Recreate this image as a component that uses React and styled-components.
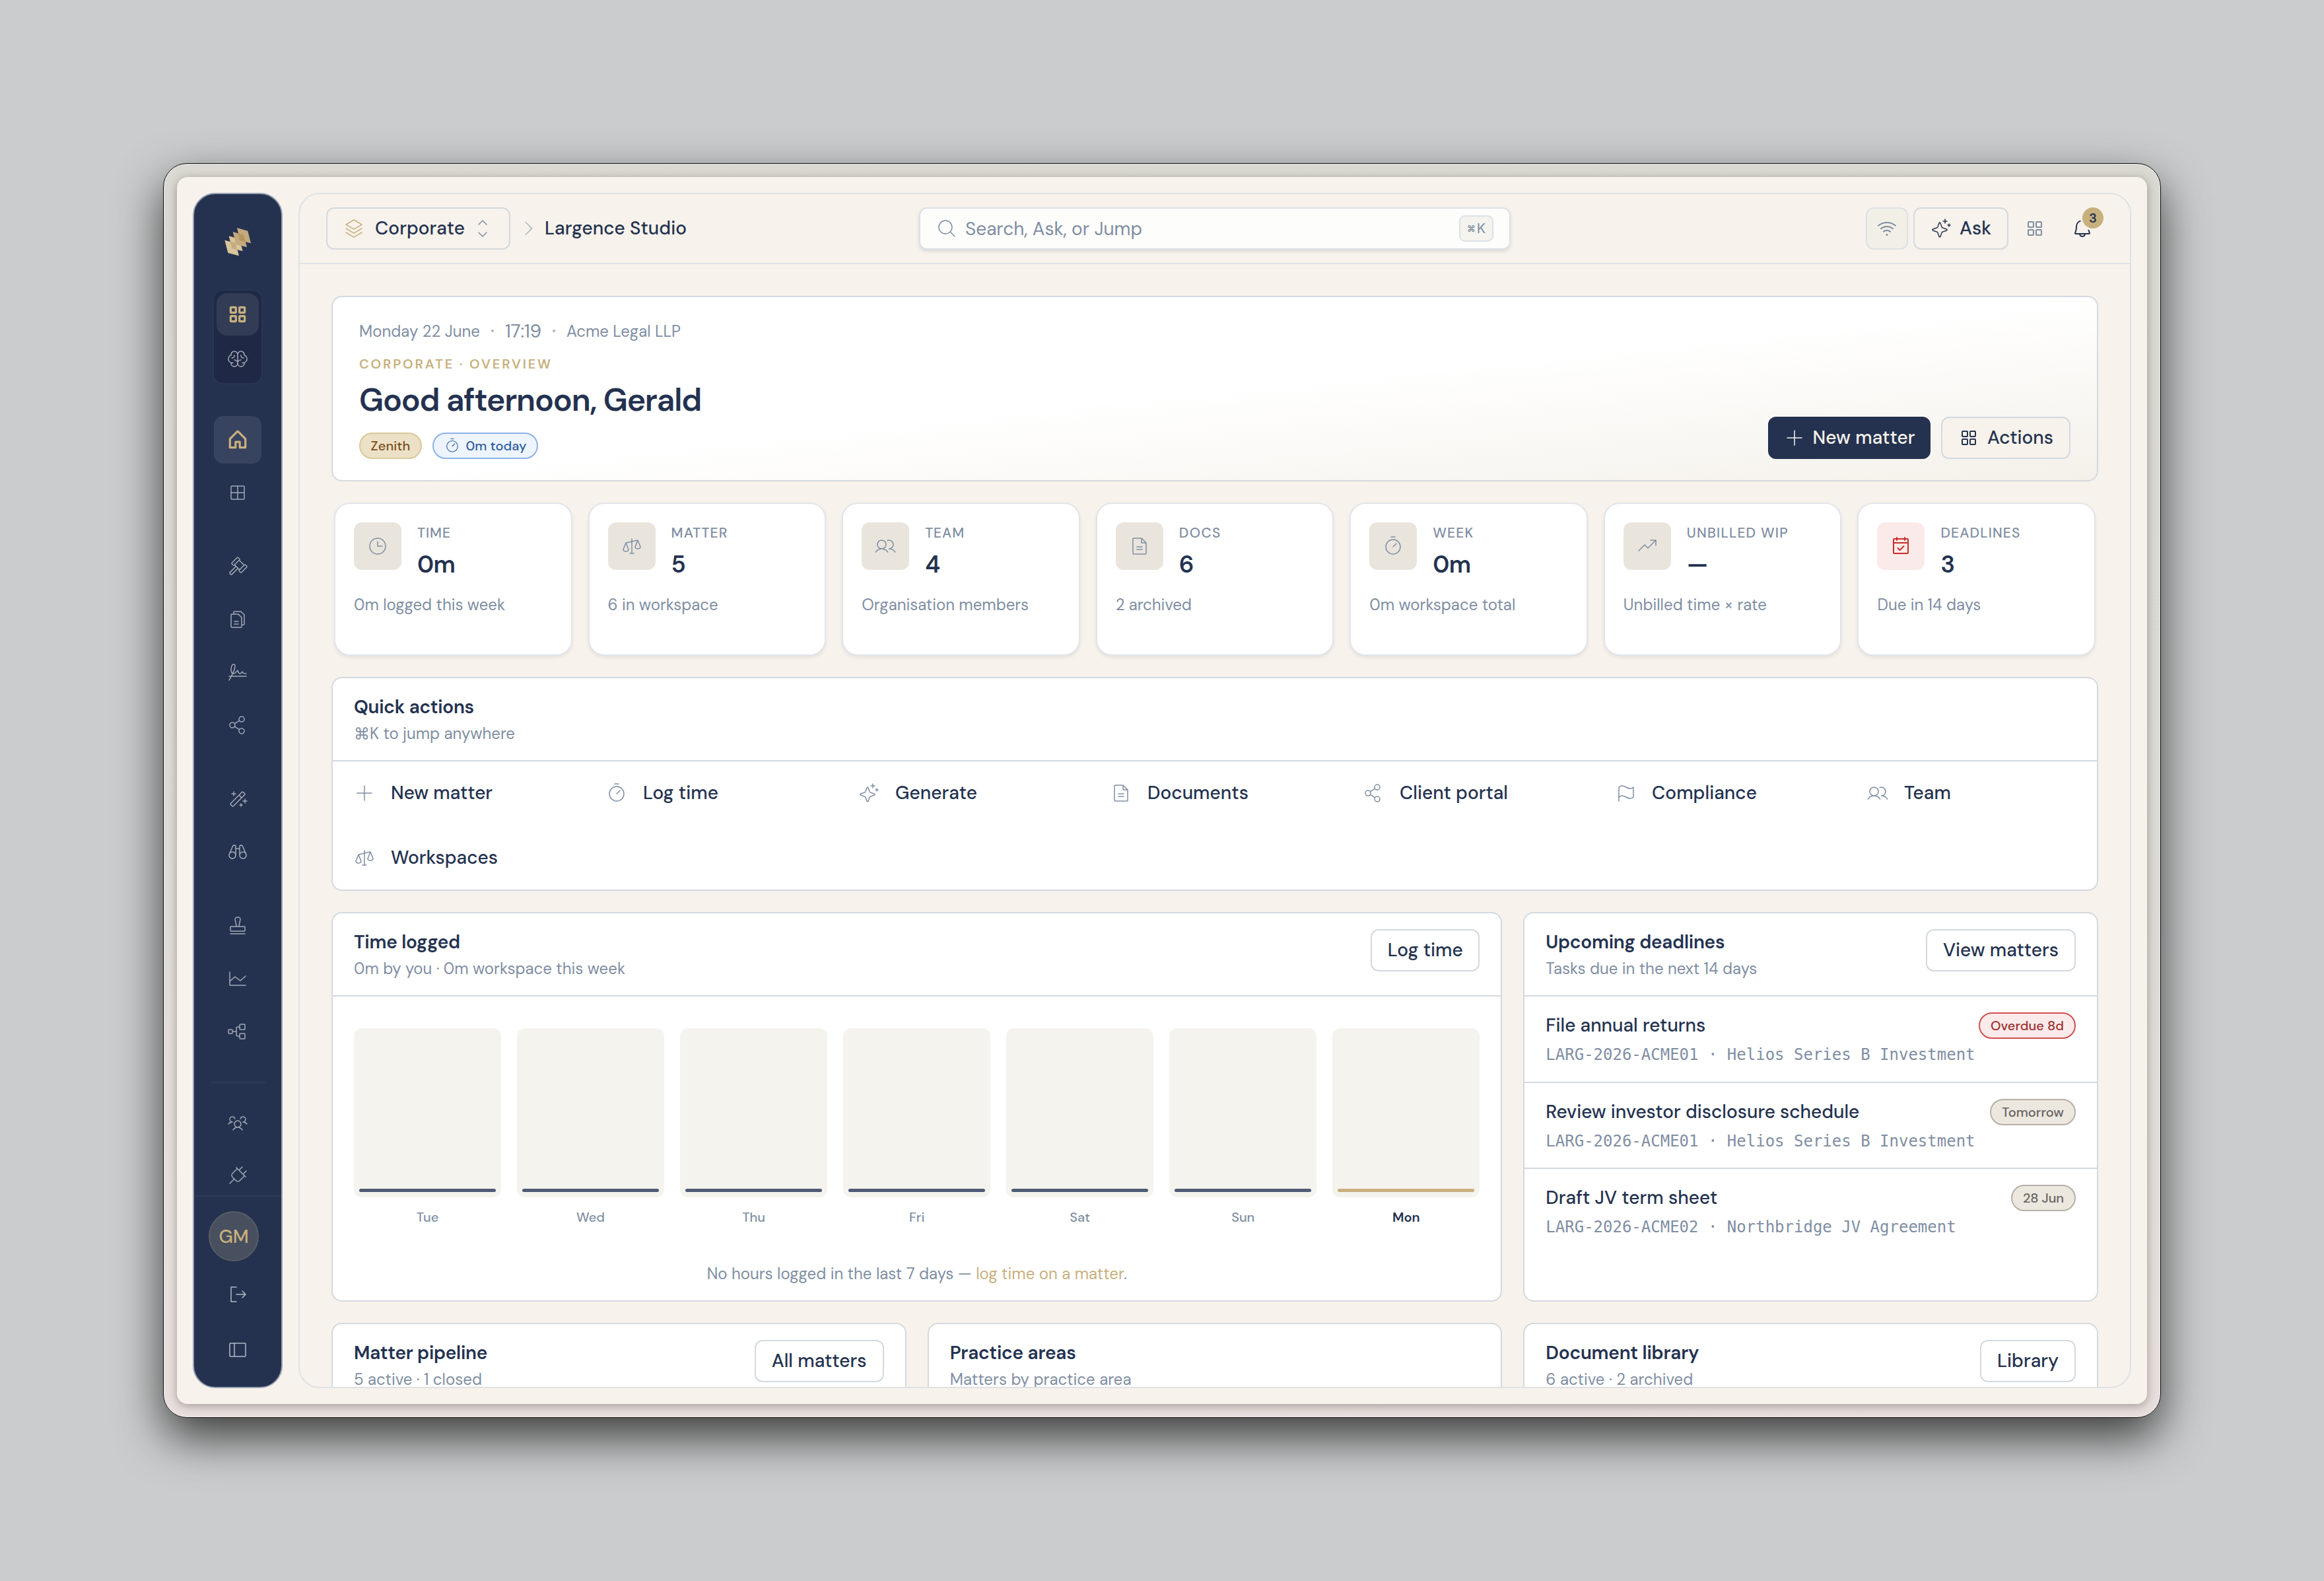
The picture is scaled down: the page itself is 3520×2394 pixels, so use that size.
import { useLayoutEffect, useRef, useState } from 'react';
import styled, { createGlobalStyle, css } from 'styled-components';
import {
  PiBell,
  PiBinocularsLight,
  PiBrainLight,
  PiCalendarCheck,
  PiCaretRightLight,
  PiCaretUpDownLight,
  PiChartLineLight,
  PiClockLight,
  PiFilesLight,
  PiFileTextLight,
  PiFlagLight,
  PiGavelLight,
  PiGridFourLight,
  PiHouseBold,
  PiMagicWandLight,
  PiMagnifyingGlassLight,
  PiPlugLight,
  PiPlusLight,
  PiScalesLight,
  PiShareNetworkLight,
  PiSidebarSimpleLight,
  PiSignatureLight,
  PiSignOutLight,
  PiSparkleLight,
  PiSquaresFour,
  PiSquaresFourBold,
  PiStackLight,
  PiStampLight,
  PiTimerLight,
  PiTreeStructureLight,
  PiTrendUpLight,
  PiUsersLight,
  PiUsersThreeLight,
  PiWifiHigh,
} from 'react-icons/pi';

const navy = '#243250';
const slate = '#7f8ea3';
const gold = '#c8b07e';
const line = '#d3d9e0';
const sand = '#f7f2eb';

// size, weight and the optical size that goes with it
const type = (size, weight = 400) => css`
  font-size: ${size}px;
  font-weight: ${weight};
  font-variation-settings: 'opsz' ${Math.max(12, size / 2)};
`;

const GlobalStyle = createGlobalStyle`
  * {
    box-sizing: border-box;
  }
  body {
    margin: 0;
    background: #cbcccd;
    color: ${navy};
    font-family: 'DM Sans', Inter, 'Noto Sans', sans-serif;
    -webkit-font-smoothing: antialiased;
  }
  svg {
    display: block;
    flex: none;
  }
`;

const Desk = styled.div`
  width: 3520px;
  height: 2394px;
  padding: 247px 0 0 247px;
  overflow: hidden;
`;

const Device = styled.div`
  width: 3026px;
  height: 1900px;
  padding: 20px;
  border: 1px solid #0c0e0e;
  border-radius: 36px;
  background: linear-gradient(185deg, #d9d8d1 0%, #dcdad5 50%, #e8e0de 95%);
  box-shadow: 0 30px 70px rgba(0, 0, 0, 0.7), inset 0 0 2px 1px rgba(255, 255, 255, 0.35);
`;

const Screen = styled.div`
  display: flex;
  gap: 24px;
  width: 100%;
  height: 100%;
  padding: 24px;
  border-radius: 16px;
  background: ${sand};
  box-shadow: 0 3px 14px rgba(60, 50, 45, 0.4);
`;

/* sidebar */

const Sidebar = styled.aside`
  display: flex;
  flex-direction: column;
  flex: none;
  width: 136px;
  border: 2px solid #98a1b3;
  border-radius: 34px;
  background: ${navy};
  overflow: hidden;
`;

const Brand = styled.div`
  display: flex;
  justify-content: center;
  flex: none;
  height: 146px;
  padding-top: 41px;
`;

const Switch = styled.div`
  display: flex;
  flex-direction: column;
  gap: 4px;
  align-self: center;
  flex: none;
  width: 72px;
  height: 140px;
  padding: 4px;
  margin-bottom: 50px;
  border-radius: 14px;
  background: #1f2945;
  box-shadow: 0 0 0 2px rgba(255, 255, 255, 0.02);
`;

const SwitchItem = styled.div`
  display: flex;
  align-items: center;
  justify-content: center;
  height: 64px;
  border-radius: 16px;
  color: ${(p) => (p.$active ? gold : '#a3a8b4')};
  background: ${(p) => (p.$active ? '#323d55' : 'transparent')};
`;

const Nav = styled.nav`
  flex: 1;
  min-height: 0;
  overflow: hidden;
`;

const NavGroup = styled.div`
  display: flex;
  flex-direction: column;
  align-items: center;
  gap: 8px;
  margin-bottom: 40px;
`;

const NavItem = styled.div`
  display: flex;
  align-items: center;
  justify-content: center;
  flex: none;
  width: 72px;
  height: 72px;
  border-radius: 14px;
  color: ${(p) => (p.$active ? gold : '#a3a8b4')};
  background: ${(p) => (p.$active ? '#38445f' : 'transparent')};
`;

const NavRule = styled.div`
  height: 2px;
  margin: 0 24px 24px;
  background: #2d3b5b;
`;

const SideFoot = styled.div`
  display: flex;
  flex-direction: column;
  align-items: center;
  flex: none;
  height: 290px;
  padding-top: 22px;
  border-top: 2px solid #2d3b5b;
`;

const Avatar = styled.div`
  display: flex;
  align-items: center;
  justify-content: center;
  align-self: flex-start;
  width: 76px;
  height: 76px;
  margin: 0 0 14px 22px;
  border: 2px solid #585c64;
  border-radius: 50%;
  background: #484f5e;
  color: ${gold};
  ${type(28, 500)}
`;

const FootItem = styled(NavItem)`
  margin-bottom: 12px;
  color: #b4bac5;
`;

/* main panel */

const Main = styled.main`
  display: flex;
  flex-direction: column;
  flex: 1;
  min-width: 0;
  border: 2px solid #dfe2e5;
  border-radius: 32px;
  overflow: hidden;
`;

const TopBar = styled.header`
  display: grid;
  grid-template-columns: 1fr 896px 1fr;
  align-items: center;
  flex: none;
  height: 106px;
  padding: 0 40px;
  border-bottom: 2px solid #dfe2e5;
`;

const TopSide = styled.div`
  display: flex;
  align-items: center;
  justify-content: ${(p) => (p.$end ? 'flex-end' : 'flex-start')};
  gap: ${(p) => (p.$end ? '8px' : '0')};
  height: 64px;
`;

const OrgButton = styled.div`
  display: flex;
  align-items: center;
  width: 279px;
  height: 64px;
  padding: 0 24px;
  border: 2px solid ${line};
  border-radius: 12px;
  color: ${slate};
  ${type(28, 500)}

  svg:first-child {
    margin-right: 16px;
    color: ${gold};
  }
  svg:last-child {
    margin-left: auto;
  }
`;

const Crumb = styled.div`
  display: flex;
  align-items: center;
  gap: 10px;
  margin-left: 12px;
  color: #a3adba;
  ${type(28, 500)}
`;

const Ink = styled.span`
  margin-top: -1px;
  color: ${navy};
`;

const SearchBox = styled.div`
  display: flex;
  align-items: center;
  gap: 12px;
  height: 64px;
  padding: 0 24px;
  border: 2px solid #dce1e6;
  border-radius: 12px;
  background: #fdfdfb;
  box-shadow: 0 3px 5px rgba(36, 50, 80, 0.12);
  color: ${slate};
  ${type(28)}
`;

const Kbd = styled.kbd`
  display: flex;
  align-items: center;
  justify-content: center;
  gap: 2px;
  width: 52px;
  height: 40px;
  margin-left: auto;
  border: 2px solid #dce1e6;
  border-radius: 9px;
  background: #f4f3ee;
  font-family: Inter, 'DejaVu Sans', sans-serif;
  font-size: 20px;

  span {
    font-size: 13px;
    font-weight: 600;
  }
`;

const IconButton = styled.div`
  display: flex;
  align-items: center;
  justify-content: center;
  position: relative;
  width: 64px;
  height: 64px;
  border: 2px solid ${(p) => (p.$filled ? '#dde1e4' : 'transparent')};
  border-radius: 12px;
  background: ${(p) => (p.$filled ? '#f2efe6' : 'transparent')};
  color: ${(p) => (p.$dark ? navy : slate)};
`;

const Count = styled.span`
  position: absolute;
  top: -5px;
  right: -5px;
  width: 38px;
  height: 38px;
  border: 3px solid ${sand};
  border-radius: 50%;
  background: ${gold};
  color: ${navy};
  ${type(20, 600)}
  line-height: 32px;
  text-align: center;
`;

const Button = styled.div`
  display: flex;
  align-items: center;
  justify-content: center;
  gap: 12px;
  flex: none;
  width: ${(p) => p.$width}px;
  height: 64px;
  border: 2px solid ${line};
  border-radius: 12px;
  color: ${navy};
  ${type(28, 500)}
  ${(p) =>
    p.$primary &&
    css`
      border-color: ${navy};
      background: ${navy};
      color: ${sand};
    `}
  ${(p) =>
    p.$sand &&
    css`
      background: ${sand};
    `}

  > span {
    margin-top: -1px;
  }
`;

const Content = styled.div`
  display: flex;
  flex-direction: column;
  gap: 32px;
  flex: 1;
  min-height: 0;
  padding: 48px 48px 0;
  overflow: hidden;
`;

const Hero = styled.section`
  display: flex;
  justify-content: space-between;
  align-items: flex-end;
  flex: none;
  height: 281px;
  padding: 32px 40px;
  border: 2px solid ${line};
  border-radius: 16px;
  background: linear-gradient(to bottom right, #fff 0%, #fff 50%, #f4f1ea 100%);
`;

const HeroMeta = styled.div`
  display: flex;
  align-items: center;
  height: 40px;
  color: ${slate};
  ${type(24)}
`;

const Dot = styled.span`
  width: 4px;
  height: 4px;
  margin: 0 17px;
  border-radius: 50%;
  background: #a9b4c2;
`;

const Clock = styled.span`
  ${type(28)}
`;

const Eyebrow = styled.div`
  margin-top: 16px;
  color: ${gold};
  ${type(20, 600)}
  line-height: 28px;
`;

const Greeting = styled.h1`
  margin: 12px 0 20px;
  ${type(48, 600)}
  line-height: 58px;
`;

const Row = styled.div`
  display: flex;
  gap: 16px;
`;

const tones = {
  gold: ['#ece1c6', '#d9c899', '#7b4d1d'],
  blue: ['#edf4fe', '#8db2e6', '#2f5d9f'],
  red: ['#fbeaea', '#d0504d', '#9c2f2f'],
  stone: ['#ece7df', '#b5b1a6', '#66645f'],
};

const Pill = styled.span`
  display: flex;
  align-items: center;
  justify-content: center;
  gap: 9px;
  flex: none;
  width: ${(p) => p.$width}px;
  height: 40px;
  border: 2px solid ${(p) => tones[p.$tone][1]};
  border-radius: 20px;
  background: ${(p) => tones[p.$tone][0]};
  color: ${(p) => tones[p.$tone][2]};
  ${type(20, 500)}
`;

const Stats = styled.section`
  display: grid;
  grid-template-columns: repeat(7, 1fr);
  gap: 24px;
  flex: none;
  height: 232px;
  padding: 0 4px;
`;

const StatCard = styled.div`
  padding: 28px;
  border: 2px solid #e1e5ea;
  border-radius: 24px;
  background: #fff;
  box-shadow: 0 3px 5px rgba(36, 50, 80, 0.08);
`;

const StatTop = styled.div`
  display: flex;
  gap: 24px;
`;

const StatIcon = styled.div`
  display: flex;
  align-items: center;
  justify-content: center;
  width: 72px;
  height: 72px;
  border-radius: 12px;
  background: ${(p) => (p.$alert ? '#fbeaea' : '#eae5dc')};
  color: ${(p) => (p.$alert ? '#cb2f28' : slate)};
`;

const StatLabel = styled.div`
  color: ${slate};
  ${type(21, 500)}
  line-height: 32px;
`;

const StatValue = styled.div`
  margin-top: 9px;
  ${type(36, 600)}
  line-height: 46px;
`;

const StatNote = styled.div`
  margin-top: 21px;
  color: ${slate};
  ${type(24)}
  line-height: 34px;
`;

const Panel = styled.section`
  grid-column: span ${(p) => p.$span || 1};
  flex: none;
  height: ${(p) => p.$height}px;
  border: 2px solid ${line};
  border-radius: 16px;
  background: #fff;
`;

const PanelHead = styled.div`
  display: flex;
  justify-content: space-between;
  height: 126px;
  padding: 24px 32px 0;
  border-bottom: 2px solid ${line};
`;

const PanelTitle = styled.h2`
  margin: 0;
  ${type(28, 600)}
  line-height: 40px;
`;

const PanelNote = styled.div`
  margin-top: 2px;
  color: ${slate};
  ${type(24)}
  line-height: 36px;
`;

const Actions = styled.div`
  display: grid;
  grid-template-columns: repeat(7, 382px);
  grid-auto-rows: 98px;
`;

const Action = styled.div`
  display: flex;
  align-items: center;
  gap: 24px;
  padding: 0 0 2px 32px;
  color: ${slate};
  ${type(28, 500)}
`;

const Columns = styled.div`
  display: grid;
  grid-template-columns: repeat(3, 1fr);
  gap: 32px;
  flex: none;
`;

const Chart = styled.div`
  display: flex;
  gap: 24px;
  padding: 48px 32px 0;
`;

const Day = styled.div`
  flex: 1;
  color: ${(p) => (p.$today ? navy : slate)};
  ${(p) => type(20, p.$today ? 600 : 500)}
  line-height: 28px;
  text-align: center;
`;

const Track = styled.div`
  display: flex;
  flex-direction: column;
  justify-content: flex-end;
  height: 256px;
  padding: 8px;
  margin-bottom: 16px;
  border-radius: 12px;
  background: #f4f3ee;
`;

const Bar = styled.div`
  height: 5px;
  border-radius: 3px;
  background: ${(p) => (p.$today ? gold : '#505b76')};
`;

const ChartNote = styled.div`
  margin-top: 54px;
  color: ${slate};
  ${type(24)}
  line-height: 36px;
  text-align: center;

  em {
    color: ${gold};
    font-style: normal;
  }
`;

const Deadline = styled.div`
  height: 130.5px;
  padding: 24px 32px 0;
  border-bottom: ${(p) => (p.$last ? 'none' : `2px solid ${line}`)};
`;

const DeadlineTop = styled.div`
  display: flex;
  justify-content: space-between;
  ${type(28, 500)}
  line-height: 40px;
`;

const DeadlineRef = styled.div`
  margin-top: 6px;
  color: ${slate};
  font-family: 'DejaVu Sans Mono', monospace;
  font-size: 24px;
  line-height: 36px;
`;

const FitText = styled.span`
  display: inline-block;
  white-space: pre;
`;

// Tracks the text so that it fills exactly the given width.
function Fit({ w, children }) {
  const ref = useRef(null);
  const [spacing, setSpacing] = useState(0);

  useLayoutEffect(() => {
    const el = ref.current;
    el.style.letterSpacing = '0px';
    const next = (w - el.getBoundingClientRect().width) / el.textContent.length;
    el.style.letterSpacing = `${next}px`;
    setSpacing(next);
  }, [w]);

  return (
    <FitText ref={ref} style={{ letterSpacing: `${spacing}px` }}>
      {children}
    </FitText>
  );
}

function Logo() {
  return (
    <svg width="60" height="60" viewBox="0 0 180 180" strokeLinejoin="round">
      <path d="M50 67 98 81 113 136 64 124Z" fill="#d8c59d" />
      <path d="M31 86 80 100 96 157 46 144Z" fill="#d8c59d" />
      <path d="M55 91 80 98 88 130 64 124Z" fill="#c4ac80" />
      <path d="M87 30 136 44 150 100 100 88Z" fill="#c3a97d" />
      <path d="M68 48 117 62 132 118 82 105Z" fill="#c3a97d" />
      <path d="M92 55 117 62 125 94 100 88Z" fill="#b4965c" />
    </svg>
  );
}

const navGroups = [
  [PiHouseBold, PiGridFourLight],
  [PiGavelLight, PiFilesLight, PiSignatureLight, PiShareNetworkLight],
  [PiMagicWandLight, PiBinocularsLight],
  [PiStampLight, PiChartLineLight, PiTreeStructureLight],
];

const stats = [
  { icon: PiClockLight, label: 'TIME', lw: 51, value: '0m', vw: 57, note: '0m logged this week', nw: 229 },
  { icon: PiScalesLight, label: 'MATTER', lw: 86, value: '5', vw: 21, note: '6 in workspace', nw: 167 },
  { icon: PiUsersLight, label: 'TEAM', lw: 60, value: '4', vw: 22, note: 'Organisation members', nw: 253 },
  { icon: PiFileTextLight, label: 'DOCS', lw: 64, value: '6', vw: 22, note: '2 archived', nw: 115 },
  { icon: PiTimerLight, label: 'WEEK', lw: 62, value: '0m', vw: 57, note: '0m workspace total', nw: 221 },
  { icon: PiTrendUpLight, label: 'UNBILLED WIP', lw: 154, value: '—', vw: 30, note: 'Unbilled time × rate', nw: 217 },
  { icon: PiCalendarCheck, label: 'DEADLINES', lw: 121, value: '3', vw: 21, note: 'Due in 14 days', nw: 157, alert: true },
];

const actions = [
  [PiPlusLight, 'New matter', 154],
  [PiTimerLight, 'Log time', 114],
  [PiSparkleLight, 'Generate', 124],
  [PiFileTextLight, 'Documents', 153],
  [PiShareNetworkLight, 'Client portal', 164],
  [PiFlagLight, 'Compliance', 159],
  [PiUsersLight, 'Team', 71],
  [PiScalesLight, 'Workspaces', 162],
];

const days = ['Tue', 'Wed', 'Thu', 'Fri', 'Sat', 'Sun', 'Mon'];

const deadlines = [
  { title: 'File annual returns', w: 242, tag: 'Overdue 8d', tw: 111, pw: 147, tone: 'red', ref: 'LARG-2026-ACME01 · Helios Series B Investment' },
  { title: 'Review investor disclosure schedule', w: 475, tag: 'Tomorrow', tw: 94, pw: 130, tone: 'stone', ref: 'LARG-2026-ACME01 · Helios Series B Investment' },
  { title: 'Draft JV term sheet', w: 260, tag: '28 Jun', tw: 62, pw: 98, tone: 'stone', ref: 'LARG-2026-ACME02 · Northbridge JV Agreement' },
];

function Head({ title, tw, note, nw, button, bw, btw }) {
  return (
    <PanelHead>
      <div>
        <PanelTitle>
          <Fit w={tw}>{title}</Fit>
        </PanelTitle>
        <PanelNote>
          <Fit w={nw}>{note}</Fit>
        </PanelNote>
      </div>
      {button && (
        <Button $width={bw}>
          <Fit w={btw}>{button}</Fit>
        </Button>
      )}
    </PanelHead>
  );
}

function SideNav() {
  return (
    <Sidebar>
      <Brand>
        <Logo />
      </Brand>
      <Switch>
        <SwitchItem $active>
          <PiSquaresFourBold size={34} />
        </SwitchItem>
        <SwitchItem>
          <PiBrainLight size={32} />
        </SwitchItem>
      </Switch>
      <Nav>
        {navGroups.map((group, g) => (
          <NavGroup key={g}>
            {group.map((Icon, i) => (
              <NavItem key={i} $active={g === 0 && i === 0}>
                <Icon size={g === 0 && i === 0 ? 34 : 32} />
              </NavItem>
            ))}
          </NavGroup>
        ))}
        <NavRule />
        <NavGroup>
          <NavItem>
            <PiUsersThreeLight size={32} />
          </NavItem>
          <NavItem>
            <PiPlugLight size={32} />
          </NavItem>
        </NavGroup>
      </Nav>
      <SideFoot>
        <Avatar>
          <Fit w={45}>GM</Fit>
        </Avatar>
        <FootItem>
          <PiSignOutLight size={32} />
        </FootItem>
        <FootItem>
          <PiSidebarSimpleLight size={32} />
        </FootItem>
      </SideFoot>
    </Sidebar>
  );
}

function Top() {
  return (
    <TopBar>
      <TopSide>
        <OrgButton>
          <PiStackLight size={32} />
          <Ink>
            <Fit w={136}>Corporate</Fit>
          </Ink>
          <PiCaretUpDownLight size={32} />
        </OrgButton>
        <Crumb>
          <PiCaretRightLight size={30} />
          <Ink>
            <Fit w={215}>Largence Studio</Fit>
          </Ink>
        </Crumb>
      </TopSide>
      <SearchBox>
        <PiMagnifyingGlassLight size={32} />
        <Fit w={268}>Search, Ask, or Jump</Fit>
        <Kbd>
          <span>⌘</span>K
        </Kbd>
      </SearchBox>
      <TopSide $end>
        <IconButton $filled>
          <PiWifiHigh size={32} />
        </IconButton>
        <Button $width={144}>
          <PiSparkleLight size={32} />
          <Fit w={48}>Ask</Fit>
        </Button>
        <IconButton>
          <PiSquaresFour size={32} />
        </IconButton>
        <IconButton $dark>
          <PiBell size={32} />
          <Count>3</Count>
        </IconButton>
      </TopSide>
    </TopBar>
  );
}

export default function App() {
  return (
    <Desk>
      <GlobalStyle />
      <Device>
        <Screen>
          <SideNav />
          <Main>
            <Top />
            <Content>
              <Hero>
                <div>
                  <HeroMeta>
                    <Fit w={183}>Monday 22 June</Fit>
                    <Dot />
                    <Clock>
                      <Fit w={55}>17:19</Fit>
                    </Clock>
                    <Dot />
                    <Fit w={173}>Acme Legal LLP</Fit>
                  </HeroMeta>
                  <Eyebrow>
                    <Fit w={293}>CORPORATE · OVERVIEW</Fit>
                  </Eyebrow>
                  <Greeting>
                    <Fit w={518}>Good afternoon, Gerald</Fit>
                  </Greeting>
                  <Row>
                    <Pill $tone="gold" $width={95}>
                      <Fit w={60}>Zenith</Fit>
                    </Pill>
                    <Pill $tone="blue" $width={160}>
                      <PiTimerLight size={24} />
                      <Fit w={92}>0m today</Fit>
                    </Pill>
                  </Row>
                </div>
                <Row>
                  <Button $primary $width={246}>
                    <PiPlusLight size={32} />
                    <Fit w={155}>New matter</Fit>
                  </Button>
                  <Button $sand $width={196}>
                    <PiSquaresFour size={32} />
                    <Fit w={100}>Actions</Fit>
                  </Button>
                </Row>
              </Hero>

              <Stats>
                {stats.map((s) => (
                  <StatCard key={s.label}>
                    <StatTop>
                      <StatIcon $alert={s.alert}>
                        <s.icon size={32} />
                      </StatIcon>
                      <div>
                        <StatLabel>
                          <Fit w={s.lw}>{s.label}</Fit>
                        </StatLabel>
                        <StatValue>
                          <Fit w={s.vw}>{s.value}</Fit>
                        </StatValue>
                      </div>
                    </StatTop>
                    <StatNote>
                      <Fit w={s.nw}>{s.note}</Fit>
                    </StatNote>
                  </StatCard>
                ))}
              </Stats>

              <Panel $height={324}>
                <Head title="Quick actions" tw={182} note="⌘K to jump anywhere" nw={244} />
                <Actions>
                  {actions.map(([Icon, label, w]) => (
                    <Action key={label}>
                      <Icon size={32} />
                      <Ink>
                        <Fit w={w}>{label}</Fit>
                      </Ink>
                    </Action>
                  ))}
                </Actions>
              </Panel>

              <Columns>
                <Panel $span={2} $height={590}>
                  <Head
                    title="Time logged"
                    tw={161}
                    note="0m by you · 0m workspace this week"
                    nw={411}
                    button="Log time"
                    bw={165}
                    btw={114}
                  />
                  <Chart>
                    {days.map((day) => (
                      <Day key={day} $today={day === 'Mon'}>
                        <Track>
                          <Bar $today={day === 'Mon'} />
                        </Track>
                        {day}
                      </Day>
                    ))}
                  </Chart>
                  <ChartNote>
                    <Fit w={636}>
                      No hours logged in the last 7 days — <em>log time on a matter</em>.
                    </Fit>
                  </ChartNote>
                </Panel>
                <Panel $height={590}>
                  <Head
                    title="Upcoming deadlines"
                    tw={271}
                    note="Tasks due in the next 14 days"
                    nw={320}
                    button="View matters"
                    bw={227}
                    btw={175}
                  />
                  {deadlines.map((d, i) => (
                    <Deadline key={d.title} $last={i === deadlines.length - 1}>
                      <DeadlineTop>
                        <Fit w={d.w}>{d.title}</Fit>
                        <Pill $tone={d.tone} $width={d.pw}>
                          <Fit w={d.tw}>{d.tag}</Fit>
                        </Pill>
                      </DeadlineTop>
                      <DeadlineRef>{d.ref}</DeadlineRef>
                    </Deadline>
                  ))}
                </Panel>

                <Panel $height={400}>
                  <Head
                    title="Matter pipeline"
                    tw={202}
                    note="5 active · 1 closed"
                    nw={194}
                    button="All matters"
                    bw={196}
                    btw={144}
                  />
                </Panel>
                <Panel $height={400}>
                  <Head title="Practice areas" tw={191} note="Matters by practice area" nw={275} />
                </Panel>
                <Panel $height={400}>
                  <Head
                    title="Document library"
                    tw={232}
                    note="6 active · 2 archived"
                    nw={223}
                    button="Library"
                    bw={145}
                    btw={93}
                  />
                </Panel>
              </Columns>
            </Content>
          </Main>
        </Screen>
      </Device>
    </Desk>
  );
}
